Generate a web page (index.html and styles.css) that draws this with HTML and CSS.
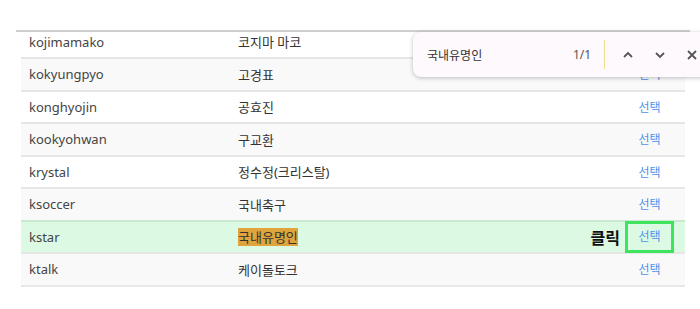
FILE: index.html
```html
<!DOCTYPE html>
<html lang="ko">
<head>
<meta charset="utf-8">
<link rel="stylesheet" href="styles.css">
</head>
<body>
<div class="page">
  <div class="topline"></div>
  <div class="list">
    <div class="row first"><span class="c1">kojimamako</span><span class="c2">코지마 마코</span><span class="act"><a class="sel">선택</a></span></div>
    <div class="row alt"><span class="c1">kokyungpyo</span><span class="c2">고경표</span><span class="act"><a class="sel">선택</a></span></div>
    <div class="row"><span class="c1">konghyojin</span><span class="c2">공효진</span><span class="act"><a class="sel">선택</a></span></div>
    <div class="row alt"><span class="c1">kookyohwan</span><span class="c2">구교환</span><span class="act"><a class="sel">선택</a></span></div>
    <div class="row"><span class="c1">krystal</span><span class="c2">정수정(크리스탈)</span><span class="act"><a class="sel">선택</a></span></div>
    <div class="row alt"><span class="c1">ksoccer</span><span class="c2">국내축구</span><span class="act"><a class="sel">선택</a></span></div>
    <div class="row hit"><span class="c1">kstar</span><span class="c2"><mark class="hl">국내유명인</mark></span><span class="act"><b class="click">클릭</b><a class="sel boxed">선택</a></span></div>
    <div class="row alt"><span class="c1">ktalk</span><span class="c2">케이돌토크</span><span class="act"><a class="sel">선택</a></span></div>
  </div>
  <div class="find">
    <span class="q">국내유명인</span>
    <span class="cnt">1/1</span>
    <span class="div"></span>
    <svg class="ic" width="14" height="14" viewBox="0 0 14 14"><path d="M3 9 L7 5 L11 9" fill="none" stroke="#555" stroke-width="1.8"/></svg>
    <svg class="ic" width="14" height="14" viewBox="0 0 14 14"><path d="M3 5 L7 9 L11 5" fill="none" stroke="#555" stroke-width="1.8"/></svg>
    <svg class="ic" width="14" height="14" viewBox="0 0 14 14"><path d="M3 3 L11 11 M11 3 L3 11" fill="none" stroke="#555" stroke-width="1.8"/></svg>
  </div>
</div>
</body>
</html>
```
FILE: styles.css
```css
html, body { margin: 0; padding: 0; background: #fff; }
body { font-family: "Noto Sans", "Noto Sans CJK KR", sans-serif; font-size: 13px; color: #444; }
.page { position: relative; width: 700px; height: 309px; overflow: hidden; padding-top: 30px; box-sizing: border-box; }
.topline { margin-left: 16px; width: 674px; height: 2px; background: #cfcfcf; }
.list { margin-left: 21px; width: 664px; border-bottom: 2px solid #e8e8e8; }
.row { display: flex; align-items: center; box-sizing: border-box; height: 32.5px; border-top: 2px solid #e6e6e6; background: #fff; padding-left: 8px; }
.row.first { height: 25px; border-top: none; padding-bottom: 6px; padding-top: 0; }
.row.alt { background: #f9f9f9; }
.row.hit { background: #dcf9e4; border-top-color: #c9e9d1; }
.c1 { width: 209px; flex: none; }
.c2 { flex: 1; color: #333; }
.act { display: flex; align-items: center; padding-right: 11px; height: 100%; }
.sel { display: block; width: 49px; text-align: center; color: #4d93ee; font-size: 12px; box-sizing: border-box; }
.sel.boxed { border: 3px solid #3ee45e; height: 32px; line-height: 26px; }
.click { font-size: 16px; font-weight: 700; color: #111; margin-right: 5px; }
.hl { background: #e0a43c; color: #333; padding: 0; }
.find { position: absolute; left: 413px; top: 32px; width: 300px; height: 45px; box-sizing: border-box; background: #fdf9fd; border-radius: 8px; box-shadow: 0 1px 4px rgba(0,0,0,0.25); display: flex; align-items: center; padding-left: 14px; }
.q { flex: none; color: #333; font-size: 12px; width: 146px; }
.cnt { flex: none; color: #555; font-size: 12px; width: 31px; }
.div { flex: none; width: 1px; height: 29px; background: #f1dc90; margin-right: 16px; }
.ic { margin-right: 18px; flex: none; }
```
